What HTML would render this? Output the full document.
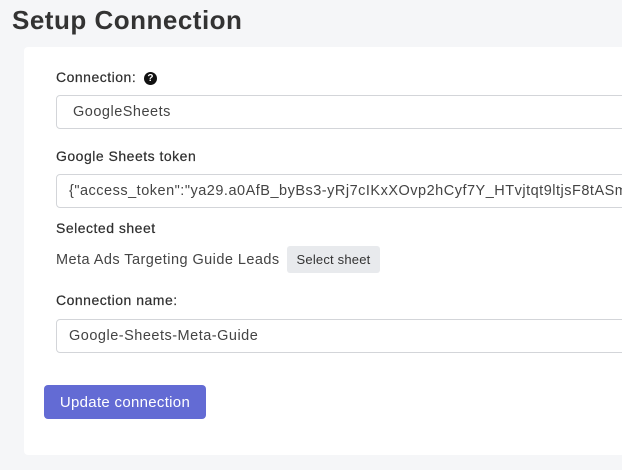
<!DOCTYPE html>
<html><head><style>
body{margin:0;width:622px;height:470px;background:#f5f6f8;font-family:"Liberation Sans",sans-serif;color:#333;position:relative;overflow:hidden}
.a{position:absolute;white-space:nowrap}
h1{position:absolute;left:12px;top:5px;margin:0;font-size:26px;font-weight:bold;color:#333;letter-spacing:0.5px}
.card{position:absolute;left:24px;top:47px;width:620px;height:408px;background:#fff;border-radius:4px}
.lbl{font-size:14px;color:#2e2e2e;letter-spacing:0.5px;-webkit-text-stroke:0.2px #2e2e2e}
.inp{position:absolute;left:56px;width:600px;height:32px;border:1px solid #d3d5d9;border-radius:4px;background:#fff;font-size:14.5px;color:#444;line-height:33px;box-sizing:content-box;white-space:nowrap;overflow:hidden;letter-spacing:0.5px}
.q{display:inline-block;width:13px;height:13px;border-radius:50%;background:#111;color:#fff;font-size:10px;font-weight:bold;text-align:center;line-height:13px;vertical-align:1px;margin-left:8px;-webkit-text-stroke:0}
</style></head><body>
<h1>Setup Connection</h1>
<div class="card"></div>
<div class="a lbl" style="left:56px;top:69px">Connection:<span class="q">?</span></div>
<div class="inp" style="top:95px;padding-left:16px;width:584px">GoogleSheets</div>
<div class="a lbl" style="left:56px;top:148px">Google Sheets token</div>
<div class="inp" style="top:174px;padding-left:12px;width:588px">{"access_token":"ya29.a0AfB_byBs3-yRj7cIKxXOvp2hCyf7Y_HTvjtqt9ltjsF8tASme</div>
<div class="a lbl" style="left:56px;top:220px">Selected sheet</div>
<div class="a" style="left:56px;top:252px;font-size:14.5px;color:#444;letter-spacing:0.45px">Meta Ads Targeting Guide Leads</div>
<div class="a" style="left:287px;top:246px;width:93px;height:27px;background:#e8eaed;border-radius:3px;font-size:13px;line-height:27px;text-align:center;color:#333;letter-spacing:0.2px">Select sheet</div>
<div class="a lbl" style="left:56px;top:292px">Connection name:</div>
<div class="inp" style="top:319px;padding-left:12px;width:588px">Google-Sheets-Meta-Guide</div>
<div class="a" style="left:44px;top:385px;width:162px;height:34px;background:#636bd4;border-radius:4px;color:#fff;font-size:15px;line-height:35px;text-align:center;letter-spacing:0.3px">Update connection</div>
</body></html>
